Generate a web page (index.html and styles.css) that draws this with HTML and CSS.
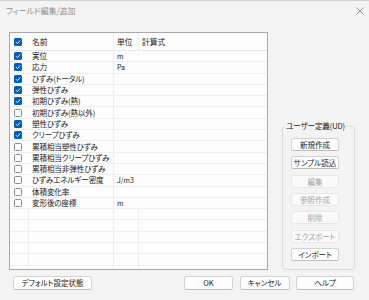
FILE: index.html
```html
<!DOCTYPE html>
<html lang="ja">
<head>
<meta charset="utf-8">
<link rel="stylesheet" href="styles.css">
</head>
<body>
<div class="window">
  <div class="titlebar">
    <span class="title">フィールド編集/追加</span>
    <svg class="close" width="8" height="8" viewBox="0 0 8 8"><path d="M0.5 0.5 L7.5 7.5 M7.5 0.5 L0.5 7.5" stroke="#7a7a7a" stroke-width="0.8" fill="none"/></svg>
  </div>
  <div class="main">
    <div class="table">
      <div class="row hdr">
        <span class="c0"><span class="cb on"><svg viewBox="0 0 8 8"><path d="M2 4.2 L3.4 5.6 L6.2 2.5" stroke="#fff" stroke-width="0.9" fill="none"/></svg></span></span>
        <span class="c1">名前</span><span class="c2">単位</span><span class="c3">計算式</span>
      </div>
      <div class="row"><span class="c0"><span class="cb on"><svg viewBox="0 0 8 8"><path d="M2 4.2 L3.4 5.6 L6.2 2.5" stroke="#fff" stroke-width="0.9" fill="none"/></svg></span></span><span class="c1">実位</span><span class="c2">m</span><span class="c3"></span></div>
      <div class="row"><span class="c0"><span class="cb on"><svg viewBox="0 0 8 8"><path d="M2 4.2 L3.4 5.6 L6.2 2.5" stroke="#fff" stroke-width="0.9" fill="none"/></svg></span></span><span class="c1">応力</span><span class="c2">Pa</span><span class="c3"></span></div>
      <div class="row"><span class="c0"><span class="cb on"><svg viewBox="0 0 8 8"><path d="M2 4.2 L3.4 5.6 L6.2 2.5" stroke="#fff" stroke-width="0.9" fill="none"/></svg></span></span><span class="c1">ひずみ(トータル)</span><span class="c2"></span><span class="c3"></span></div>
      <div class="row"><span class="c0"><span class="cb on"><svg viewBox="0 0 8 8"><path d="M2 4.2 L3.4 5.6 L6.2 2.5" stroke="#fff" stroke-width="0.9" fill="none"/></svg></span></span><span class="c1">弾性ひずみ</span><span class="c2"></span><span class="c3"></span></div>
      <div class="row"><span class="c0"><span class="cb on"><svg viewBox="0 0 8 8"><path d="M2 4.2 L3.4 5.6 L6.2 2.5" stroke="#fff" stroke-width="0.9" fill="none"/></svg></span></span><span class="c1">初期ひずみ(熱)</span><span class="c2"></span><span class="c3"></span></div>
      <div class="row"><span class="c0"><span class="cb"></span></span><span class="c1">初期ひずみ(熱以外)</span><span class="c2"></span><span class="c3"></span></div>
      <div class="row"><span class="c0"><span class="cb on"><svg viewBox="0 0 8 8"><path d="M2 4.2 L3.4 5.6 L6.2 2.5" stroke="#fff" stroke-width="0.9" fill="none"/></svg></span></span><span class="c1">塑性ひずみ</span><span class="c2"></span><span class="c3"></span></div>
      <div class="row"><span class="c0"><span class="cb on"><svg viewBox="0 0 8 8"><path d="M2 4.2 L3.4 5.6 L6.2 2.5" stroke="#fff" stroke-width="0.9" fill="none"/></svg></span></span><span class="c1">クリープひずみ</span><span class="c2"></span><span class="c3"></span></div>
      <div class="row"><span class="c0"><span class="cb"></span></span><span class="c1">累積相当塑性ひずみ</span><span class="c2"></span><span class="c3"></span></div>
      <div class="row"><span class="c0"><span class="cb"></span></span><span class="c1">累積相当クリープひずみ</span><span class="c2"></span><span class="c3"></span></div>
      <div class="row"><span class="c0"><span class="cb"></span></span><span class="c1">累積相当非弾性ひずみ</span><span class="c2"></span><span class="c3"></span></div>
      <div class="row"><span class="c0"><span class="cb"></span></span><span class="c1">ひずみエネルギー密度</span><span class="c2">J/m3</span><span class="c3"></span></div>
      <div class="row"><span class="c0"><span class="cb"></span></span><span class="c1">体積変化率</span><span class="c2"></span><span class="c3"></span></div>
      <div class="row"><span class="c0"><span class="cb"></span></span><span class="c1">変形後の座標</span><span class="c2">m</span><span class="c3"></span></div>
      <div class="row empty"><span class="c0"></span><span class="c1"></span><span class="c2"></span><span class="c3"></span></div>
      <div class="row empty"><span class="c0"></span><span class="c1"></span><span class="c2"></span><span class="c3"></span></div>
      <div class="row empty"><span class="c0"></span><span class="c1"></span><span class="c2"></span><span class="c3"></span></div>
      <div class="row empty"><span class="c0"></span><span class="c1"></span><span class="c2"></span><span class="c3"></span></div>
      <div class="row empty"><span class="c0"></span><span class="c1"></span><span class="c2"></span><span class="c3"></span></div>
      <div class="row empty"><span class="c0"></span><span class="c1"></span><span class="c2"></span><span class="c3"></span></div>
    </div>
    <fieldset class="group">
      <legend>ユーザー定義(UD)</legend>
      <button class="btn">新規作成</button>
      <button class="btn">サンプル読込</button>
      <button class="btn" disabled>編集</button>
      <button class="btn" disabled>参照作成</button>
      <button class="btn" disabled>削除</button>
      <button class="btn" disabled>エクスポート</button>
      <button class="btn">インポート</button>
    </fieldset>
  </div>
  <div class="footer">
    <button class="btn fbtn wide">デフォルト設定状態</button>
    <span class="spacer"></span>
    <button class="btn fbtn ok">OK</button>
    <button class="btn fbtn cancel">キャンセル</button>
    <button class="btn fbtn help">ヘルプ</button>
  </div>
</div>
</body>
</html>
```
FILE: styles.css
```css
* { box-sizing: border-box; }
html, body { margin: 0; padding: 0; }
body {
  background: #f3f3f3;
  font-family: "Noto Sans CJK JP", "Noto Sans", sans-serif;
  font-size: 8px;
  font-feature-settings: "palt";
  color: #1b1b1b;
}
.window {
  width: 369px;
  height: 300px;
  border-top: 1px solid #d4d4d4;
  background: #f3f3f3;
  overflow: hidden;
}
.titlebar {
  height: 20px;
  display: flex;
  align-items: center;
  justify-content: space-between;
  padding: 0 5px 0 6px;
}
.title { color: #8f8f8f; font-size: 8px; line-height: 10px; }
.close { display: block; margin-top: -1px; }
.main {
  display: flex;
  align-items: flex-end;
  gap: 14px;
  padding-left: 9px;
  margin-top: 11px;
}
.table {
  width: 259px;
  height: 238px;
  border: 1px solid #a9a9a9;
  background: #fdfdfd;
  overflow: hidden;
}
.row {
  display: grid;
  grid-template-columns: 18px 85px 25px 1fr;
  height: 11.3px;
  border-bottom: 1px solid #eeeeee;
  line-height: 10px;
}
.row > span { display: flex; align-items: center; min-width: 0; white-space: nowrap; }
.row.hdr { height: 18px; border-bottom-color: #e8e8e8; }
.c0 { padding-left: 4px; }
.c1 { padding-left: 4px; font-size: 7.6px; letter-spacing: -0.15px; }
.c2 { padding-left: 3px; border-left: 1px solid #ececec; font-size: 7px; }
.c3 { padding-left: 3px; }
.hdr .c1, .hdr .c2, .hdr .c3 { font-size: 7.8px; letter-spacing: 0; }
.hdr .c3 { border-left: 1px solid #e8e8e8; }
.empty .c1, .empty .c3 { border-left: 1px solid #ececec; }
.cb {
  width: 8px;
  height: 8px;
  border-radius: 1.5px;
  border: 1px solid #8c8c8c;
  background: #fbfbfb;
  display: block;
}
.cb.on { border: none; background: #005fb8; }
.cb svg { display: block; width: 8px; height: 8px; }
.group {
  width: 73px;
  min-width: 0;
  height: 149px;
  margin: 0;
  padding: 7px 0 0 8px;
  border: 1px solid #dcdcdc;
  border-radius: 3px;
  display: flex;
  flex-direction: column;
  gap: 5.35px;
}
.group legend {
  padding: 0 1px;
  margin-left: -6px;
  font-size: 7.6px;
  line-height: 10px;
  letter-spacing: -0.15px;
  white-space: nowrap;
  color: #1b1b1b;
}
.btn {
  font-family: inherit;
  font-size: 7.5px;
  font-feature-settings: "palt";
  color: #1b1b1b;
  width: 48px;
  height: 13px;
  padding: 0;
  margin: 0;
  background: #fdfdfd;
  border: 1px solid #d3d3d3;
  border-bottom-color: #bdbdbd;
  border-radius: 2.5px;
  line-height: 11px;
  white-space: nowrap;
}
.btn:disabled {
  color: #a2a2a2;
  background: #fafafa;
  border-color: #e6e6e6;
}
.footer {
  display: flex;
  align-items: center;
  margin-top: 6px;
  padding: 0 15px 0 13px;
  gap: 6.5px;
}
.spacer { flex: 1; }
.fbtn { height: 13.5px; }
.wide { width: 79px; }
.ok { width: 49px; }
.cancel { width: 50px; }
.help { width: 58px; }
```
